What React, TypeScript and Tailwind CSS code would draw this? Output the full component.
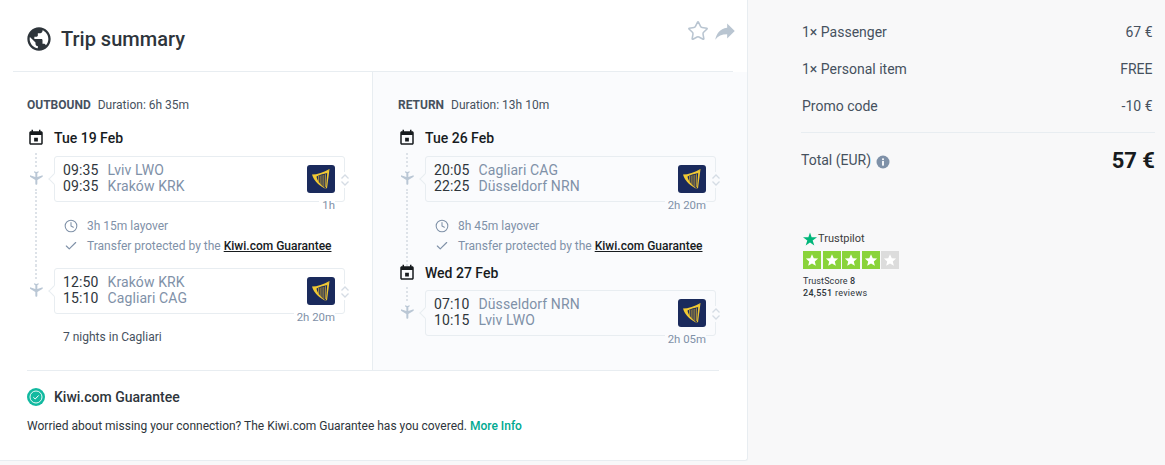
import { Check, Clock, Star } from 'lucide-react';

const FONT = 'font-["Roboto",sans-serif]';

type Leg = { dep: string; depPlace: string; arr: string; arrPlace: string; dur: string };

function Dots({ className = '' }: { className?: string }) {
  return <div className={`w-0 border-l-2 border-dotted border-[#dde2e8] ${className}`} />;
}

function CalendarIcon() {
  return (
    <svg viewBox="0 0 24 24" className="w-[18px] h-[18px] -my-px" fill="#171b1e">
      <path d="M14.5 11.5h-5v5h5v-5zM16 1v2H8V1H6v2H5c-1.11 0-1.99.9-1.99 2L3 19c0 1.1.89 2 2 2h14c1.1 0 2-.9 2-2V5c0-1.1-.9-2-2-2h-1V1h-2zm3 18H5V8h14v11z" />
    </svg>
  );
}

function PlaneIcon() {
  return (
    <svg viewBox="0 0 24 24" className="w-4 h-4 rotate-180 shrink-0" fill="#bac7d5">
      <path d="M21 16v-2l-8-5V3.5c0-.83-.67-1.5-1.5-1.5S10 2.67 10 3.5V9l-8 5v2l8-2.5V19l-2 1.5V22l3.5-1 3.5 1v-1.5L13 19v-5.5l8 2.5z" />
    </svg>
  );
}

function RyanairLogo() {
  return (
    <svg viewBox="0 0 28 28" className="w-7 h-7 rounded-[3px] shrink-0">
      <rect width="28" height="28" fill="#1a2a5c" />
      <path d="M5 9.5C10 9.5 17 7.5 22.5 4L20.5 8C16 9 12 10 9.5 11.5C10 15.5 13.5 20 19.5 24C12.5 21.5 7 16 5 9.5Z" fill="#f1c933" />
      <path d="M22.5 4L20 23.5L19 23L20.3 7Z" fill="#f1c933" />
      <path d="M11.5 11v7M13.2 10.6v9M15 10.2v11M16.8 9.8v12M18.5 9.2v13" stroke="#e0b52c" strokeWidth="0.7" />
    </svg>
  );
}

function DateRow({ date }: { date: string }) {
  return (
    <div className="flex h-4 items-center">
      <div className="w-[18px] flex justify-center mr-[9px]">
        <CalendarIcon />
      </div>
      <span className="text-[14px] font-medium text-[#171b1e]">{date}</span>
    </div>
  );
}

function Segment({ leg, last, bg }: { leg: Leg; last?: boolean; bg: string }) {
  return (
    <div className="flex pt-[10px]">
      <div className="w-[18px] mr-[9px] flex flex-col items-center">
        <Dots className="h-[14px] mt-[-3px]" />
        <div className="mt-[3px]"><PlaneIcon /></div>
        {!last && <Dots className="flex-1 mt-[3px]" />}
      </div>
      <div className="relative w-[291px] h-[46px] border border-[#e8edf1] rounded-[3px] pl-2 pr-[9px] flex items-center justify-between">
        <div className={`absolute left-[-5px] top-[18px] w-2 h-2 rotate-45 border-l border-b border-[#e8edf1] ${bg}`} />
        <div className="text-[14px] leading-4 tracking-[0.1px] -mt-[2px]">
          <div className="flex">
            <span className="w-[44.5px] text-[#2e353b]">{leg.dep}</span>
            <span className="text-[#7f91a8]">{leg.depPlace}</span>
          </div>
          <div className="flex">
            <span className="w-[44.5px] text-[#2e353b]">{leg.arr}</span>
            <span className="text-[#7f91a8]">{leg.arrPlace}</span>
          </div>
        </div>
        <RyanairLogo />
        <div className={`absolute right-[-6px] top-[15px] ${bg} py-px`}>
          <svg viewBox="0 0 10 16" className="w-[10px] h-4 -my-px" fill="none" stroke="#d5dce4" strokeWidth="1.3">
            <path d="M1.5 6.5L5 3l3.5 3.5M1.5 9.5L5 13l3.5-3.5" />
          </svg>
        </div>
        <div className={`absolute right-[9px] top-[41px] ${bg} pl-[3px] text-[11.4px] leading-[14px] text-[#7f91a8]`}>{leg.dur}</div>
      </div>
    </div>
  );
}

function Layover({ text }: { text: string }) {
  return (
    <div className="flex">
      <div className="w-[18px] mr-[9px] flex justify-center">
        <Dots className="mt-[2px]" />
      </div>
      <div className="pt-[16px] pb-[12px] text-[12px] text-[#7f91a8]">
        <div className="flex h-4 items-center">
          <Clock className="w-[14px] h-[14px] ml-[10px] mr-[9px]" strokeWidth={1.8} color="#7f91a8" />
          {text}
        </div>
        <div className="flex h-4 items-center mt-1">
          <Check className="w-[14px] h-[14px] ml-[10px] mr-[9px]" strokeWidth={2} color="#7f91a8" />
          Transfer protected by the&nbsp;
          <a className="font-medium text-[#171b1e] underline">Kiwi.com Guarantee</a>
        </div>
      </div>
    </div>
  );
}

function SummaryRow({ label, value }: { label: string; value: string }) {
  return (
    <div className="flex justify-between h-[37px] items-center pl-px pr-[2.5px] text-[14px] text-[#46515e]">
      <span>{label}</span>
      <span>{value}</span>
    </div>
  );
}

function TrustBox({ on }: { on: boolean }) {
  return (
    <div className={`w-[18px] h-[18px] flex items-center justify-center ${on ? 'bg-[#8ad33a]' : 'bg-[#dcdcdc]'}`}>
      <svg viewBox="0 0 24 24" className="w-[14px] h-[14px]" fill="#fff">
        <path d="M12 2l3 7 7.5.6-5.7 4.9 1.8 7.5L12 18l-6.6 4 1.8-7.5L1.5 9.6 9 9z" />
      </svg>
    </div>
  );
}

export default function App() {
  return (
    <div className={`${FONT} w-[1165px] h-[465px] bg-[#f8f8f9] flex items-start overflow-hidden`}>
      <div className="w-[748px] h-[461px] bg-white border-r border-b border-[#e8edf1] rounded-br-[3px] pl-[13px] pr-[14px] shrink-0">
        {/* header */}
        <div className="h-[72px] border-b border-[#e8edf1] flex justify-between pl-3">
          <div className="flex items-center h-[78px]">
            <svg viewBox="0 0 24 24" className="w-7 h-7 mr-[8px]" fill="#2e353b">
              <path d="M12 2C6.48 2 2 6.48 2 12s4.48 10 10 10 10-4.48 10-10S17.52 2 12 2zm-1 17.93c-3.95-.49-7-3.85-7-7.93 0-.62.08-1.21.21-1.79L9 15v1c0 1.1.9 2 2 2v1.93zm6.9-2.54c-.26-.81-1-1.39-1.9-1.39h-1v-3c0-.55-.45-1-1-1H8v-2h2c.55 0 1-.45 1-1V7h2c1.1 0 2-.9 2-2v-.41c2.93 1.19 5 4.06 5 7.41 0 2.08-.8 3.97-2.1 5.39z" />
            </svg>
            <h1 className="text-[20px] font-medium text-[#2e353b]">Trip summary</h1>
          </div>
          <div className="flex items-start pt-[20px] gap-[3px]">
            <Star className="w-[22px] h-[22px]" strokeWidth={1.7} color="#b9c5d1" />
            <svg viewBox="0 0 24 24" className="w-[26px] h-[26px] -scale-x-100 -mr-[5px] -mt-[2px]" fill="#b9c5d1">
              <path d="M10 9V5l-7 7 7 7v-4.1c5 0 8.5 1.6 11 5.1-1-5-4-10-11-11z" />
            </svg>
          </div>
        </div>

        {/* legs */}
        <div className="flex h-[298px] -mr-[14px]">
          <div className="w-[360px] border-r border-[#e8edf1] pl-[14px] pt-[25px]">
            <div className="text-[12px] h-4 leading-4 text-[#46515e] mb-[17px]">
              <span className="font-bold mr-[7px]">OUTBOUND</span>Duration: 6h 35m
            </div>
            <DateRow date="Tue 19 Feb" />
            <Segment bg="bg-white" leg={{ dep: '09:35', depPlace: 'Lviv LWO', arr: '09:35', arrPlace: 'Kraków KRK', dur: '1h' }} />
            <Layover text="3h 15m layover" />
            <div className="-mt-[8px]">
              <Segment last bg="bg-white" leg={{ dep: '12:50', depPlace: 'Kraków KRK', arr: '15:10', arrPlace: 'Cagliari CAG', dur: '2h 20m' }} />
            </div>
            <div className="pl-[36px] mt-[15px] text-[12px] h-4 leading-4 text-[#46515e]">7 nights in Cagliari</div>
          </div>
          <div className="flex-1 bg-[#fafbfd] pl-[25px] pt-[25px]">
            <div className="text-[12px] h-4 leading-4 text-[#46515e] mb-[17px]">
              <span className="font-bold mr-[7px]">RETURN</span>Duration: 13h 10m
            </div>
            <DateRow date="Tue 26 Feb" />
            <Segment bg="bg-[#fafbfd]" leg={{ dep: '20:05', depPlace: 'Cagliari CAG', arr: '22:25', arrPlace: 'Düsseldorf NRN', dur: '2h 20m' }} />
            <div className="-mb-[1px]">
              <Layover text="8h 45m layover" />
            </div>
            <div className="-mb-px">
              <DateRow date="Wed 27 Feb" />
            </div>
            <Segment last bg="bg-[#fafbfd]" leg={{ dep: '07:10', depPlace: 'Düsseldorf NRN', arr: '10:15', arrPlace: 'Lviv LWO', dur: '2h 05m' }} />
          </div>
        </div>

        {/* guarantee */}
        <div className="ml-[14px] mr-[14px] border-t border-[#e8edf1] pt-[17px]">
          <div className="flex items-center h-[18px]">
            <svg viewBox="0 0 18 18" className="w-[18px] h-[18px] mr-[9px]">
              <circle cx="9" cy="9" r="9" fill="#12b9a0" />
              <circle cx="9" cy="9" r="6" fill="none" stroke="#fff" strokeWidth="0.9" />
              <path d="M6.3 9.2l1.9 1.8 3.5-3.6" fill="none" stroke="#fff" strokeWidth="1" />
            </svg>
            <span className="text-[14px] font-medium text-[#2e353b]">Kiwi.com Guarantee</span>
          </div>
          <p className="mt-[12px] text-[12px] leading-4 text-[#2e353b]">
            Worried about missing your connection? The Kiwi.com Guarantee has you covered.{' '}
            <a className="font-medium text-[#00a991]">More Info</a>
          </p>
        </div>
      </div>

      {/* price summary */}
      <div className="flex-1 pl-[53px] pr-[10px] pt-[14px]">
        <SummaryRow label="1× Passenger" value="67 €" />
        <SummaryRow label="1× Personal item" value="FREE" />
        <SummaryRow label="Promo code" value="-10 €" />
        <div className="mt-[7px] border-t border-[#e8edf1] flex justify-between items-center h-[56px] text-[#46515e]">
          <span className="flex items-center text-[14px]">
            Total (EUR)
            <svg viewBox="0 0 14 14" className="w-[14px] h-[14px] ml-[5px] mt-[2px]">
              <circle cx="7" cy="7" r="6.5" fill="#7f91a8" />
              <rect x="6.1" y="6" width="1.8" height="4.6" fill="#fff" />
              <rect x="6.1" y="3.4" width="1.8" height="1.7" fill="#fff" />
            </svg>
          </span>
          <span className="text-[22px] font-bold text-[#171b1e]">57 €</span>
        </div>
        <div className="mt-[44px] ml-[2px]">
          <div className="flex items-center h-[14px]">
            <svg viewBox="0 0 24 24" className="w-[14px] h-[14px]" fill="#00b67a">
              <path d="M12 1l2.8 8.2H24l-7.4 5.4 2.8 8.4L12 17.8 4.6 23l2.8-8.4L0 9.2h9.2z" />
            </svg>
            <span className="ml-px text-[11px] text-[#3c3c3c]">Trustpilot</span>
          </div>
          <div className="flex gap-[1.5px] mt-[5px]">
            <TrustBox on />
            <TrustBox on />
            <TrustBox on />
            <TrustBox on />
            <TrustBox on={false} />
          </div>
          <div className="mt-[6px] text-[9px] leading-3 text-[#2e353b]">
            <div className="tracking-[0.1px]">TrustScore <span className="font-medium">8</span></div>
            <div className="tracking-[0.3px]"><span className="font-medium">24,551</span> reviews</div>
          </div>
        </div>
      </div>
    </div>
  );
}
